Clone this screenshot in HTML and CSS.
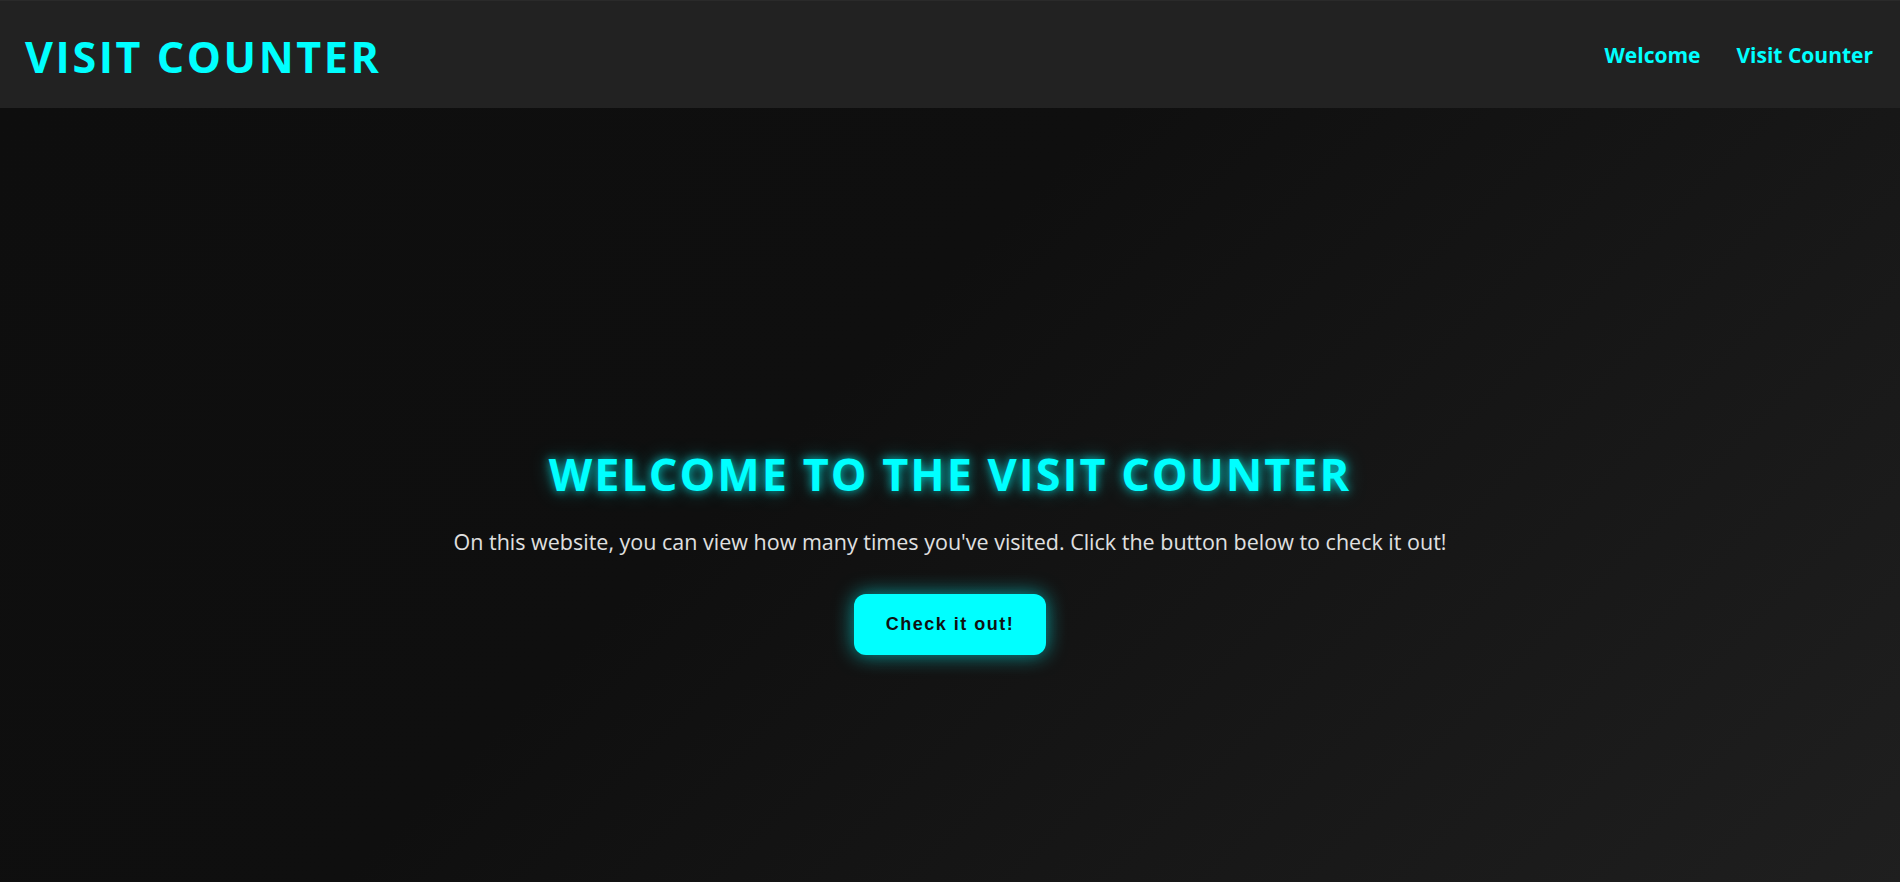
FILE: index.html
```html
<!DOCTYPE html>
<html lang="en">
<head>
<meta charset="utf-8">
<title>Visit Counter</title>
<link rel="stylesheet" href="styles.css">
</head>
<body>
<header class="topbar">
  <div class="brand">VISIT COUNTER</div>
  <nav class="nav">
    <a class="nav-link" href="#">Welcome</a>
    <a class="nav-link" href="#">Visit Counter</a>
  </nav>
</header>
<main class="hero">
  <h1 class="hero-title">WELCOME TO THE VISIT COUNTER</h1>
  <p class="hero-text">On this website, you can view how many times you've visited. Click the button below to check it out!</p>
  <button class="hero-btn" type="button">Check it out!</button>
</main>
</body>
</html>
```

FILE: styles.css
```css
* { box-sizing: border-box; }
html, body { margin: 0; padding: 0; }
body {
  font-family: "Open Sans", "Noto Sans", sans-serif;
  background: #0f0f0f;
  color: #e0e0e0;
}
.topbar {
  height: 108px;
  background: #222222;
  border-top: 1px solid #2a2a2a;
  display: flex;
  align-items: center;
  justify-content: space-between;
  padding: 0 27px 0 25px;
}
.brand {
  color: #00ffff;
  font-weight: 700;
  font-size: 43px;
  letter-spacing: 2.6px;
  line-height: 1;
  padding-top: 4px;
}
.nav {
  display: flex;
  gap: 36px;
}
.nav-link {
  color: #00ffff;
  text-decoration: none;
  font-weight: 700;
  font-size: 21px;
  line-height: 1;
  padding-top: 2px;
}
.hero {
  min-height: 100vh;
  padding-top: 4px;
  background: linear-gradient(135deg, #0e0e0e 0%, #0f0f0f 40%, #202020 100%);
  display: flex;
  flex-direction: column;
  align-items: center;
  justify-content: center;
  text-align: center;
}
.hero-title {
  margin: 0;
  color: #00ffff;
  font-size: 45px;
  font-weight: 700;
  letter-spacing: 2px;
  line-height: 1.2;
  text-shadow: 0 0 10px rgba(0, 255, 255, 0.7), 0 0 20px rgba(0, 255, 255, 0.35);
}
.hero-text {
  margin: 26px 0 38px;
  font-size: 21.5px;
  color: #e0e0e0;
}
.hero-btn {
  font-family: "Liberation Sans", Arial, sans-serif;
  font-weight: 700;
  font-size: 18px;
  letter-spacing: 1.5px;
  color: #111111;
  background: #00ffff;
  border: none;
  border-radius: 12px;
  padding: 20px 32px;
  box-shadow: 0 0 20px rgba(0, 255, 255, 0.6);
  cursor: pointer;
}
```
